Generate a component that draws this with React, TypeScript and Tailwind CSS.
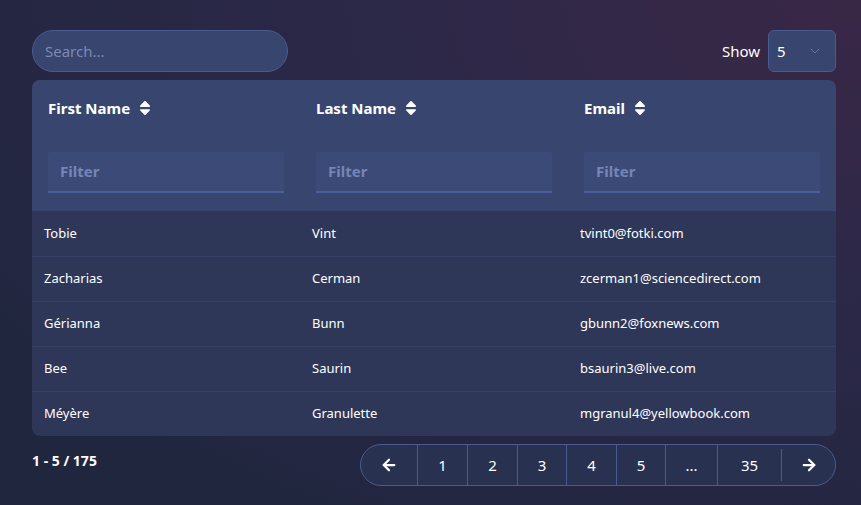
import React from "react";
import { FaSort } from "react-icons/fa";
import { ArrowLeft, ArrowRight, ChevronDown } from "lucide-react";

const rows = [
  ["Tobie", "Vint", "tvint0@fotki.com"],
  ["Zacharias", "Cerman", "zcerman1@sciencedirect.com"],
  ["Gérianna", "Bunn", "gbunn2@foxnews.com"],
  ["Bee", "Saurin", "bsaurin3@live.com"],
  ["Méyère", "Granulette", "mgranul4@yellowbook.com"],
];

const cols = ["First Name", "Last Name", "Email"];

export default function App() {
  return (
    <div
      className="w-full h-[505px] pl-[32px] pr-[25px] pt-[30px] text-white bg-[radial-gradient(ellipse_at_top_right,#3a2746_0%,#2c2848_40%,#21263f_85%)]"
      style={{ fontFamily: '"Noto Sans", "Open Sans", sans-serif' }}
    >
      <div className="flex items-center justify-between h-[42px]">
        <div className="w-[256px] h-[42px] rounded-full bg-[#37456f] border border-[#4a5a92] flex items-center px-[12px]">
          <span className="text-[15px] text-[#7c89b3]">Search...</span>
        </div>
        <div className="flex items-center gap-[8px]">
          <span className="text-[15px] text-white">Show</span>
          <div className="w-[68px] h-[42px] rounded-[6px] bg-[#37456f] border border-[#4a5a92] flex items-center justify-between pl-[8px] pr-[12px]">
            <span className="text-[15px]">5</span>
            <ChevronDown size={16} strokeWidth={1.5} className="text-[#6f6f90]" />
          </div>
        </div>
      </div>

      <div className="mt-[8px] rounded-[8px] overflow-hidden bg-[#2e3758]">
        <div className="bg-[#38466f] grid grid-cols-3 h-[131px]">
          {cols.map((c) => (
            <div key={c} className="px-[16px] pt-[18px] flex flex-col">
              <div className="flex items-center gap-[6px] h-[20px]">
                <span className="text-[15px] font-bold">{c}</span>
                <FaSort size={18} />
              </div>
              <div className="mt-[34px] h-[41px] bg-[#3c4a77] border-b-2 border-[#4c5e9a] rounded-t-[3px] flex items-center px-[12px]">
                <span className="text-[15px] font-bold text-[#7585b5]">Filter</span>
              </div>
            </div>
          ))}
        </div>
        {rows.map((r, i) => (
          <div
            key={i}
            className={`grid grid-cols-3 h-[45px] items-center ${i > 0 ? "border-t border-[#354066]" : ""}`}
          >
            {r.map((v, j) => (
              <div key={j} className="px-[12px] text-[13px] text-white">
                {v}
              </div>
            ))}
          </div>
        ))}
      </div>

      <div className="flex justify-between mt-[8px]">
        <div className="text-[14px] font-bold pt-[6px]">1 - 5 / 175</div>
        <div className="h-[42px] rounded-full border border-[#4a5a92] bg-[#283150] flex items-stretch overflow-hidden text-[15px]">
          <div className="w-[57px] flex items-center justify-center border-r border-[#4a5a92]">
            <ArrowLeft size={18} strokeWidth={3} />
          </div>
          {["1", "2", "3", "4", "5"].map((p, i) => (
            <div
              key={p}
              className={`flex items-center justify-center border-r border-[#4a5a92] ${i === 2 || i === 4 ? "w-[49px]" : "w-[50px]"}`}
            >
              {p}
            </div>
          ))}
          <div className="w-[52px] flex items-center justify-center border-r border-[#4a5a92]">...</div>
          <div className="w-[63px] flex items-center justify-center">35</div>
          <div className="flex items-center">
            <div className="w-px h-[32px] bg-[#4a5a92]" />
          </div>
          <div className="w-[53px] flex items-center justify-center">
            <ArrowRight size={18} strokeWidth={3} />
          </div>
        </div>
      </div>
    </div>
  );
}
